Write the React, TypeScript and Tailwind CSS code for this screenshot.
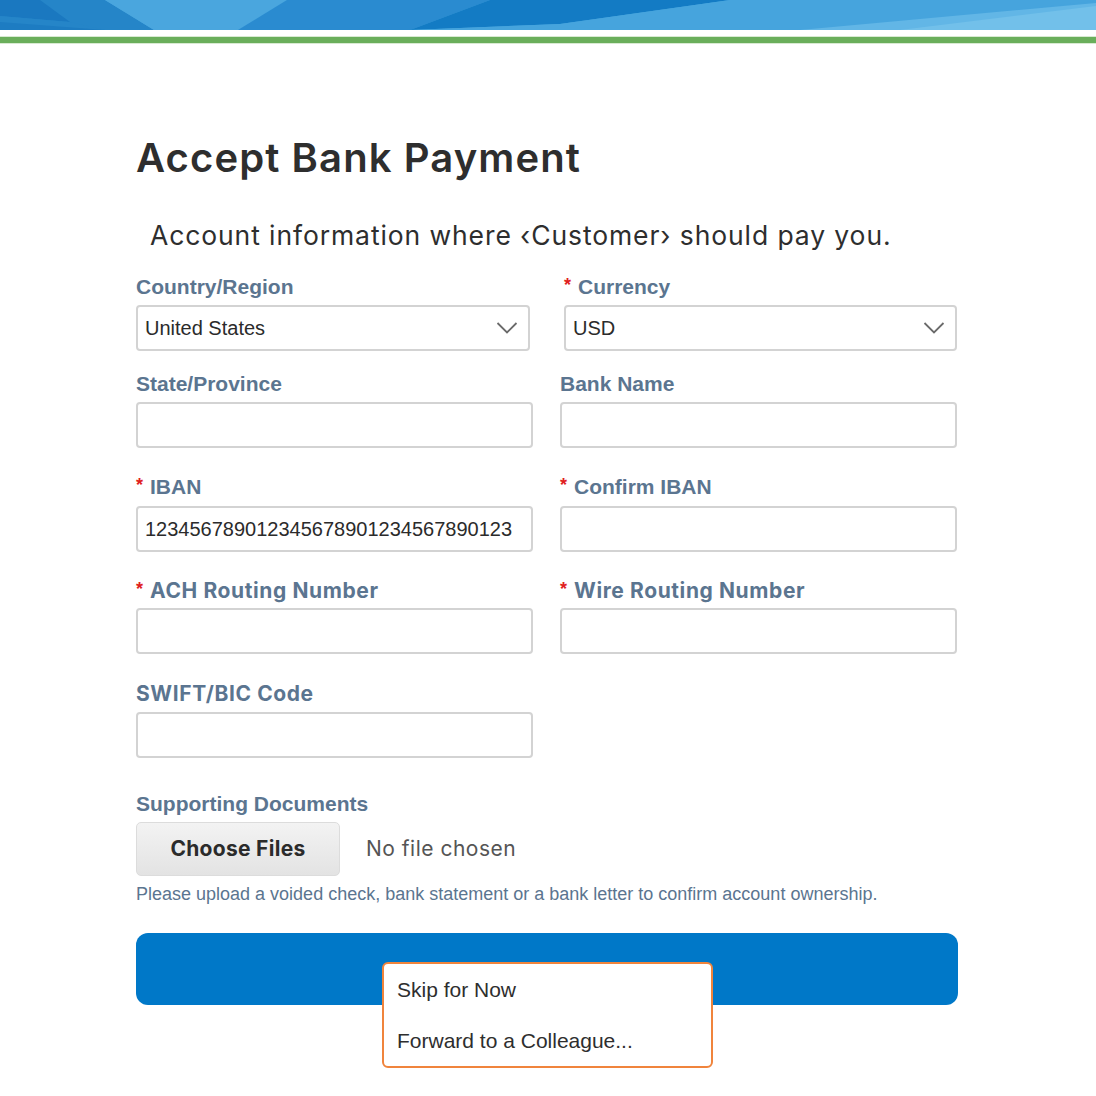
import React from "react";

const labelCls = "text-[21px] font-bold text-[#5b7590] leading-none";
const poppinsLabel = "text-[21px] font-bold text-[#5b7590] leading-none tracking-[0.6px]";
const star = <span className="text-[#e02020] text-[18px] mr-[7px] relative -top-[3px] tracking-normal" style={{ fontFamily: '"Liberation Sans", Arial, sans-serif' }}>*</span>;

function Chevron() {
  return (
    <svg width="22" height="14" viewBox="0 0 22 14" className="absolute right-[10px] top-1/2 -translate-y-1/2">
      <path d="M1.5 2 L11 11.5 L20.5 2" fill="none" stroke="#6b6b6b" strokeWidth="1.8" />
    </svg>
  );
}

function Box({ children, w = "w-[397px]" }: { children?: React.ReactNode; w?: string }) {
  return (
    <div className={`relative ${w} h-[46px] border-[2px] border-[#d3d3d3] rounded-[4px] bg-white flex items-center px-[7px] overflow-hidden text-[20px] text-[#2b2b2b] whitespace-nowrap`} style={{ fontFamily: '"Liberation Sans", Arial, sans-serif' }}>
      {children}
    </div>
  );
}

export default function App() {
  return (
    <div className="w-[1096px] h-[1096px] bg-white relative overflow-hidden" style={{ fontFamily: '"Liberation Sans", Arial, sans-serif' }}>
      {/* banner */}
      <svg width="1096" height="44" viewBox="0 0 1096 44" className="block">
        <rect x="0" y="0" width="1096" height="30" fill="#46a4dd" />
        <polygon points="0,0 105,0 154,30 0,30" fill="#2585c8" />
        <polygon points="0,0 40,0 70,22 0,16" fill="#1a78c0" />
        <polygon points="0,16 70,22 105,30 0,30" fill="#2585c8" />
        <polygon points="0,22 105,30 0,30" fill="#1d7cc2" />
        <polygon points="105,0 287,0 238,30 154,30" fill="#4aa6de" />
        <polygon points="287,0 490,0 410,30 238,30" fill="#2a8bd0" />
        <polygon points="490,0 730,0 560,24 410,30" fill="#137bc4" />
        <polygon points="730,0 1096,0 1096,1 840,30 410,30 560,24" fill="#46a4dd" />
        <polygon points="1096,3 1096,30 800,30" fill="#62b6e6" />
        <polygon points="1096,6 1096,30 900,30" fill="#72c0ea" />
        <rect x="0" y="30" width="1096" height="6" fill="#ffffff" />
        <rect x="0" y="36" width="1096" height="1" fill="#d8ead2" />
        <rect x="0" y="37" width="1096" height="6" fill="#6aae5b" />
        <rect x="0" y="43" width="1096" height="1" fill="#d8ead2" />
      </svg>

      <div className="pl-[136px] pt-[94px] w-[958px]">
        <h1 className="text-[40px] font-semibold text-[#2e2e2e] leading-none tracking-[1.1px]" style={{ fontFamily: 'Inter, "Open Sans", sans-serif' }}>
          Accept Bank Payment
        </h1>
        <p className="mt-[44px] ml-[14px] text-[26.5px] text-[#2e2e2e] leading-none tracking-[0.9px]" style={{ fontFamily: 'Inter, "Open Sans", sans-serif' }}>
          Account information where &lsaquo;Customer&rsaquo; should pay you.
        </p>

        <div className="mt-[27px] grid grid-cols-[397px_397px] gap-x-[27px]">
          {/* row 1 */}
          <div>
            <div className={labelCls}>Country/Region</div>
            <div className="mt-[8px] w-[394px]">
              <Box w="w-[394px]">United States<Chevron /></Box>
            </div>
          </div>
          <div className="pl-[4px]">
            <div className={labelCls}>{star}Currency</div>
            <div className="mt-[8px]">
              <Box w="w-[393px]">USD<Chevron /></Box>
            </div>
          </div>

          {/* row 2 */}
          <div className="mt-[22px]">
            <div className={labelCls}>State/Province</div>
            <div className="mt-[8px]"><Box /></div>
          </div>
          <div className="mt-[22px]">
            <div className={labelCls}>Bank Name</div>
            <div className="mt-[8px]"><Box /></div>
          </div>

          {/* row 3 */}
          <div className="mt-[28px]">
            <div className={labelCls}>{star}IBAN</div>
            <div className="mt-[9px]"><Box>123456789012345678901234567890123</Box></div>
          </div>
          <div className="mt-[28px]">
            <div className={labelCls}>{star}Confirm IBAN</div>
            <div className="mt-[9px]"><Box /></div>
          </div>

          {/* row 4 */}
          <div className="mt-[28px]">
            <div className={poppinsLabel} style={{ fontFamily: 'Inter, sans-serif' }}>{star}ACH Routing Number</div>
            <div className="mt-[7px]"><Box /></div>
          </div>
          <div className="mt-[28px]">
            <div className={poppinsLabel} style={{ fontFamily: 'Inter, sans-serif' }}>{star}Wire Routing Number</div>
            <div className="mt-[7px]"><Box /></div>
          </div>

          {/* row 5 */}
          <div className="mt-[29px]">
            <div className={poppinsLabel} style={{ fontFamily: 'Inter, sans-serif' }}>SWIFT/BIC Code</div>
            <div className="mt-[8px]"><Box /></div>
          </div>
          <div />
        </div>

        <div className="mt-[35px]">
          <div className={labelCls}>Supporting Documents</div>
          <div className="mt-[8px] flex items-center">
            <div className="w-[204px] h-[54px] rounded-[5px] bg-gradient-to-b from-[#f3f3f3] to-[#e3e3e3] border border-[#dcdcdc] flex items-center justify-center text-[21px] font-bold text-[#2b2b2b] tracking-[0.3px]" style={{ fontFamily: 'Inter, sans-serif' }}>
              Choose Files
            </div>
            <div className="ml-[26px] text-[21px] text-[#555] tracking-[0.5px]" style={{ fontFamily: 'Inter, sans-serif' }}>No file chosen</div>
          </div>
          <div className="mt-[5px] text-[18px] text-[#5b7590]">
            Please upload a voided check, bank statement or a bank letter to confirm account ownership.
          </div>
        </div>

        <div className="mt-[25px] w-[822px] h-[72px] rounded-[12px] bg-[#0078c8]" />
      </div>

      {/* dropdown menu */}
      <div className="absolute left-[382px] top-[962px] w-[331px] h-[106px] bg-white border-[2px] border-[#f0843c] rounded-[6px] text-[21px] text-[#2e2e2e]">
        <div className="absolute left-[13px] top-[10px]">Skip for Now</div>
        <div className="absolute left-[13px] top-[61px]">Forward to a Colleague...</div>
      </div>
    </div>
  );
}
